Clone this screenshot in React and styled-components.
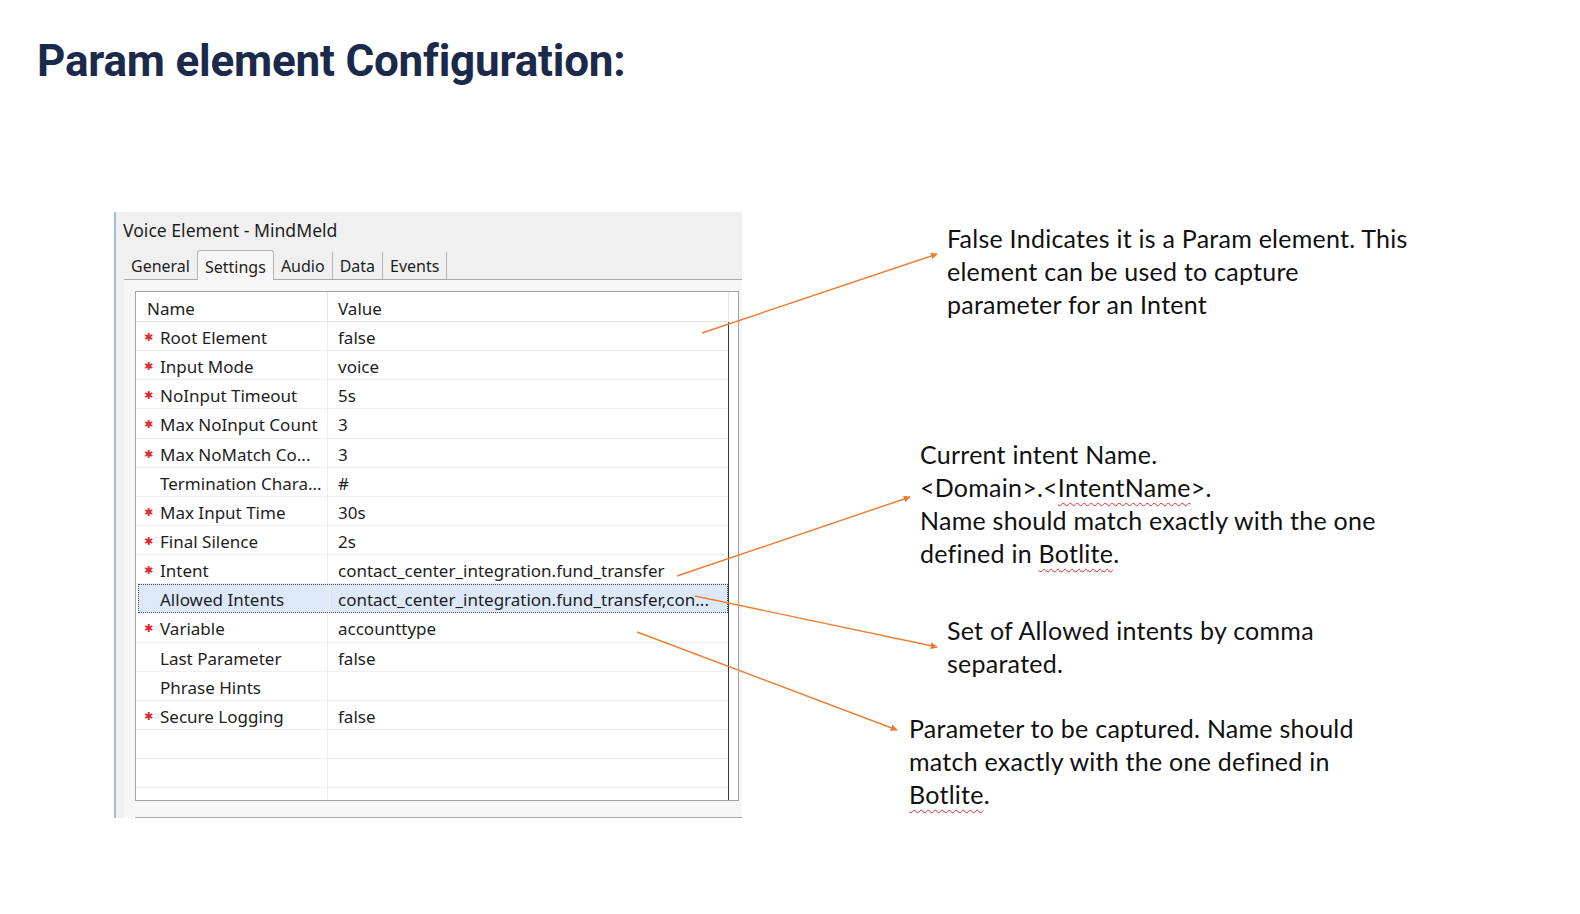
import React from "react";
import styled, { createGlobalStyle } from "styled-components";

const Global = createGlobalStyle`
  html, body { margin: 0; padding: 0; background: #ffffff; }
  body { width: 1580px; height: 914px; overflow: hidden; }
`;

const Page = styled.div`
  width: 1580px;
  height: 914px;
  padding-top: 35px;
  box-sizing: border-box;
`;

const Title = styled.h1`
  margin: 0 0 0 37px;
  font-family: Roboto, "Noto Sans", sans-serif;
  font-weight: 700;
  font-size: 44px;
  line-height: 52px;
  color: #1b2a4a;
  letter-spacing: -0.2px;
`;

const Figure = styled.div`
  position: relative;
  display: flex;
  align-items: flex-start;
  margin-top: 125px;
  height: 620px;
`;

const Dialog = styled.div`
  margin-left: 114px;
  width: 628px;
  height: 606px;
  box-sizing: border-box;
  background: #f0f0f0;
  border-left: 2px solid #a3bedc;
  display: flex;
  flex-direction: column;
  font-family: "Noto Sans", "Open Sans", sans-serif;
  color: #1e1e1e;
`;

const DialogTitle = styled.div`
  height: 38px;
  box-sizing: border-box;
  padding: 6px 0 0 7px;
  font-size: 17.6px;
  line-height: 24px;
`;

const TabStrip = styled.div`
  margin-left: 8px;
  height: 30px;
  box-sizing: border-box;
  border-bottom: 1px solid #a9a9a9;
  display: flex;
  align-items: flex-end;
`;

const Tab = styled.div`
  height: ${(p) => (p.$active ? "30px" : "27px")};
  box-sizing: border-box;
  padding: 3px 7px 0;
  font-size: 16px;
  line-height: ${(p) => (p.$active ? "26px" : "23px")};
  border-right: 1px solid #b4b4b4;
  border-left: ${(p) => (p.$active ? "1px solid #b4b4b4" : "none")};
  border-top: ${(p) => (p.$active ? "1px solid #b4b4b4" : "none")};
  border-radius: ${(p) => (p.$active ? "3px 3px 0 0" : "0")};
  background: ${(p) => (p.$active ? "#f7f7f7" : "transparent")};
  margin-bottom: ${(p) => (p.$active ? "-1px" : "0")};
  margin-left: ${(p) => (p.$active ? "-1px" : "0")};
`;

const Panel = styled.div`
  flex: 1;
  background: #f6f6f6;
  margin-left: 8px;
  padding: 11px 3px 0 11px;
  display: flex;
  flex-direction: column;
`;

const Table = styled.div`
  height: 510px;
  box-sizing: border-box;
  border: 1px solid #a2a2a2;
  background: #ffffff;
  overflow: hidden;
`;

const Grid = styled.div`
  width: 593px;
  height: 100%;
  display: flex;
  flex-direction: column;
`;

const HeaderRow = styled.div`
  height: 30px;
  flex: none;
  box-sizing: border-box;
  display: grid;
  grid-template-columns: 192px 1fr;
  border: 1px solid #e6e6e6;
  border-top: none;
  border-left: none;
  font-size: 17px;
  line-height: 28px;
`;

const HeaderCell = styled.div`
  padding: 3px 0 0 ${(p) => p.$pad}px;
  border-right: ${(p) => (p.$sep ? "1px solid #e6e6e6" : "none")};
`;

const Body = styled.div`
  flex: 1;
  border-right: 1px solid #3a3a3a;
  overflow: hidden;
`;

const Row = styled.div`
  height: 29.15px;
  box-sizing: border-box;
  display: grid;
  grid-template-columns: 192px 1fr;
  border-bottom: 1px solid #efefef;
  font-size: 17px;
  line-height: 28px;
  background: ${(p) => (p.$selected ? "#dde9f9" : "transparent")};
  outline: ${(p) => (p.$selected ? "1px dotted #4a4a4a" : "none")};
  outline-offset: -1px;
  margin-left: ${(p) => (p.$selected ? "2px" : "0")};
`;

const NameCell = styled.div`
  display: flex;
  align-items: flex-start;
  padding: 2px 0 0 ${(p) => (p.$selected ? "6px" : "8px")};
  border-right: 1px solid #efefef;
  white-space: nowrap;
  overflow: hidden;
`;

const Star = styled.span`
  width: 16px;
  flex: none;
  color: #e3262d;
  font-family: "DejaVu Sans", sans-serif;
  font-size: 11px;
  line-height: 28px;
`;

const ValueCell = styled.div`
  padding: 2px 0 0 ${(p) => (p.$selected ? "8px" : "10px")};
  white-space: nowrap;
  overflow: hidden;
`;

const FooterLine = styled.div`
  margin-top: 16px;
  border-top: 1px solid #a8a8a8;
  margin-right: -3px;
`;

const Notes = styled.div`
  display: flex;
  flex-direction: column;
  font-family: Lato, "Noto Sans", sans-serif;
  font-size: 25px;
  letter-spacing: 0.25px;
  line-height: 33px;
  color: #111111;
`;

const Note = styled.p`
  margin: ${(p) => p.$top}px 0 0 ${(p) => p.$left}px;
  white-space: nowrap;
`;

const Squiggle = styled.span`
  text-decoration: underline wavy #e0282e;
  text-decoration-thickness: 1px;
  text-underline-offset: 5px;
`;

const Arrows = styled.svg`
  position: absolute;
  left: 0;
  top: 0;
  width: 1580px;
  height: 620px;
  pointer-events: none;
  overflow: visible;
`;

const rows = [
  { name: "Root Element", value: "false", req: true },
  { name: "Input Mode", value: "voice", req: true },
  { name: "NoInput Timeout", value: "5s", req: true },
  { name: "Max NoInput Count", value: "3", req: true },
  { name: "Max NoMatch Co...", value: "3", req: true },
  { name: "Termination Chara...", value: "#" },
  { name: "Max Input Time", value: "30s", req: true },
  { name: "Final Silence", value: "2s", req: true },
  { name: "Intent", value: "contact_center_integration.fund_transfer", req: true },
  {
    name: "Allowed Intents",
    value: "contact_center_integration.fund_transfer,con...",
    selected: true,
  },
  { name: "Variable", value: "accounttype", req: true },
  { name: "Last Parameter", value: "false" },
  { name: "Phrase Hints", value: "" },
  { name: "Secure Logging", value: "false", req: true },
  { name: "", value: "" },
  { name: "", value: "" },
  { name: "", value: "" },
];

const tabs = ["General", "Settings", "Audio", "Data", "Events"];

const arrows = [
  [702, 121, 937, 42],
  [677, 364, 910, 285],
  [695, 384, 937, 435],
  [637, 420, 897, 518],
];

export default function App() {
  return (
    <>
      <Global />
      <Page>
        <Title>Param element Configuration:</Title>
        <Figure>
          <Dialog>
            <DialogTitle>Voice Element - MindMeld</DialogTitle>
            <TabStrip>
              {tabs.map((t) => (
                <Tab key={t} $active={t === "Settings"}>
                  {t}
                </Tab>
              ))}
            </TabStrip>
            <Panel>
              <Table>
                <Grid>
                  <HeaderRow>
                    <HeaderCell $pad={11} $sep>
                      Name
                    </HeaderCell>
                    <HeaderCell $pad={10}>Value</HeaderCell>
                  </HeaderRow>
                  <Body>
                    {rows.map((r, i) => (
                      <Row key={i} $selected={r.selected}>
                        <NameCell $selected={r.selected}>
                          <Star>{r.req ? "✱" : ""}</Star>
                          {r.name}
                        </NameCell>
                        <ValueCell $selected={r.selected}>{r.value}</ValueCell>
                      </Row>
                    ))}
                  </Body>
                </Grid>
              </Table>
              <FooterLine />
            </Panel>
          </Dialog>
          <Notes>
            <Note $top={10} $left={205}>
              False Indicates it is a Param element. This
              <br />
              element can be used to capture
              <br />
              parameter for an Intent
            </Note>
            <Note $top={117} $left={178}>
              Current intent Name.
              <br />
              &lt;Domain&gt;.&lt;<Squiggle>IntentName</Squiggle>&gt;.
              <br />
              Name should match exactly with the one
              <br />
              defined in <Squiggle>Botlite</Squiggle>.
            </Note>
            <Note $top={44} $left={205}>
              Set of Allowed intents by comma
              <br />
              separated.
            </Note>
            <Note $top={32} $left={167}>
              Parameter to be captured. Name should
              <br />
              match exactly with the one defined in
              <br />
              <Squiggle>Botlite</Squiggle>.
            </Note>
          </Notes>
          <Arrows viewBox="0 0 1580 620">
            <defs>
              <marker
                id="head"
                viewBox="0 0 10 10"
                refX="9"
                refY="5"
                markerWidth="7"
                markerHeight="7"
                orient="auto"
                markerUnits="userSpaceOnUse"
              >
                <path d="M0 0 L10 5 L0 10 z" fill="#ed7d31" />
              </marker>
            </defs>
            {arrows.map(([x1, y1, x2, y2], i) => (
              <line
                key={i}
                x1={x1}
                y1={y1}
                x2={x2}
                y2={y2}
                stroke="#ed7d31"
                strokeWidth="1.4"
                markerEnd="url(#head)"
              />
            ))}
          </Arrows>
        </Figure>
      </Page>
    </>
  );
}
